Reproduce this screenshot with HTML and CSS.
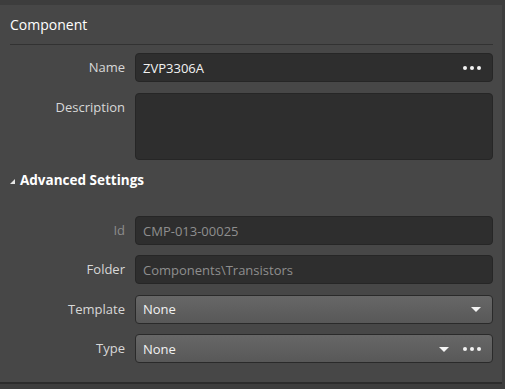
FILE: index.html
```html
<!DOCTYPE html>
<html lang="en">

<head>
  <meta charset="UTF-8">
  <title>Component Properties</title>
  <link rel="stylesheet" href="styles.css">
</head>

<body>
  <div class="panel">
    <h1 class="panel-title">Component</h1>

    <!-- General fields -->
    <div class="form">
      <label class="field-label">Name</label>
      <div class="field">
        <span class="field-value">ZVP3306A</span>
        <span class="dots"><i></i><i></i><i></i></span>
      </div>

      <label class="field-label">Description</label>
      <div class="field field-multi"></div>
    </div>

    <!-- Advanced section -->
    <div class="expander">
      <span class="expander-glyph"></span>
      <span class="expander-title">Advanced Settings</span>
    </div>

    <div class="form form-advanced">
      <label class="field-label disabled">Id</label>
      <div class="field">
        <span class="field-value muted">CMP-013-00025</span>
      </div>

      <label class="field-label">Folder</label>
      <div class="field">
        <span class="field-value muted">Components\Transistors</span>
      </div>

      <label class="field-label">Template</label>
      <div class="field combo">
        <span class="field-value">None</span>
        <span class="arrow"></span>
      </div>

      <label class="field-label">Type</label>
      <div class="field combo">
        <span class="field-value">None</span>
        <span class="arrow"></span>
        <span class="dots"><i></i><i></i><i></i></span>
      </div>
    </div>
  </div>
</body>

</html>
```

FILE: styles.css
```css
body {
  font-family: 'Open Sans', sans-serif;
  font-size: 13px;
  margin: 0;
  padding: 5px 3px 0 0;
  background-color: #3d3d3d;
  color: #dcdcdc;
  height: 384px;
}

/* Main property panel */
.panel {
  background-color: #474747;
  height: 377px;
  padding: 0 9px 0 10px;
  border-bottom: 2px solid #2c2c2c;
}

.panel-title {
  margin: 0;
  height: 39px;
  line-height: 40px;
  font-size: 14px;
  font-weight: normal;
  color: #fff;
  border-bottom: 1px solid #323232;
}

.form {
  display: grid;
  grid-template-columns: 115px 1fr;
  column-gap: 10px;
  row-gap: 11px;
  padding-top: 8px;
}

.form-advanced {
  padding-top: 0;
  row-gap: 10.4px;
}

.field-label {
  text-align: right;
  line-height: 29px;
  color: #d8d8d8;
}

.field-label.disabled {
  color: #8c8c8c;
}

.field {
  height: 27px;
  border: 1px solid #262626;
  border-radius: 4px;
  background-color: #2e2e2e;
  display: flex;
  align-items: center;
  padding: 0 10px 0 7px;
  color: #f2f2f2;
}

.field-multi {
  height: 65px;
}

.field-value {
  flex: 1;
}

.field-value.muted {
  color: #8e8e8e;
}

.combo {
  background: linear-gradient(#676767, #585858);
  border-color: #2a2a2a;
}

/* Dropdown arrow */
.arrow {
  width: 0;
  height: 0;
  border-left: 5px solid transparent;
  border-right: 5px solid transparent;
  border-top: 5px solid #f4f4f4;
  margin-top: 1px;
  margin-right: 1px;
}

.arrow + .dots {
  margin-left: 13px;
}

/* Ellipsis button */
.dots {
  display: flex;
  gap: 3px;
  margin-right: 1px;
}

.dots i {
  width: 4px;
  height: 4px;
  border-radius: 50%;
  background-color: #f2f2f2;
}

.expander {
  display: flex;
  align-items: center;
  height: 24px;
  margin: 8px 0 24px;
  color: #fff;
}

.expander-glyph {
  width: 0;
  height: 0;
  border-left: 5px solid transparent;
  border-bottom: 5px solid #e6e6e6;
  margin: 2px 5px 0 0;
}

.expander-title {
  font-weight: bold;
  font-size: 13.5px;
}
```
